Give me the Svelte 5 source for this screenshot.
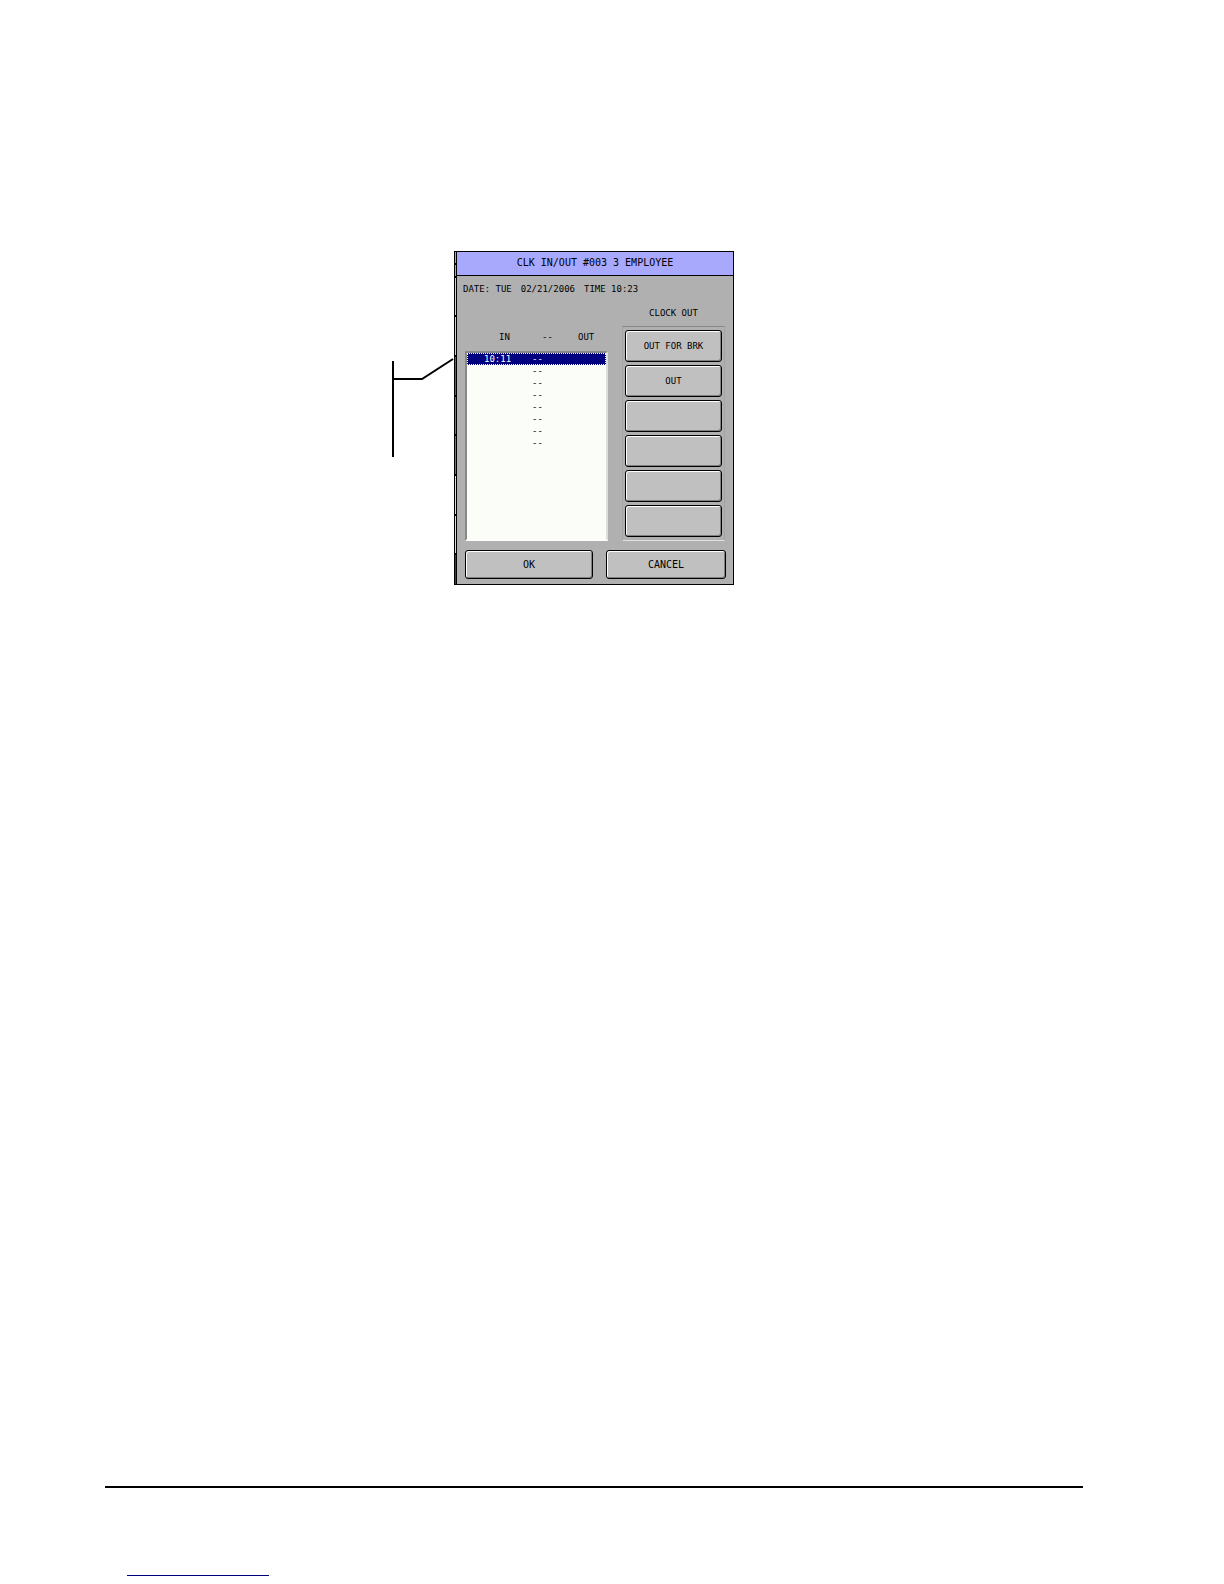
<script>
  let entries = Array.from({ length: 8 }, (_, i) => ({
    in: i === 0 ? "10:11" : "",
    out: "",
  }))
  let actions = ["OUT FOR BRK", "OUT", "", "", "", ""]
  let selected = 0
</script>

<div class="page">
  <div class="figure">
    <svg class="callout" width="62" height="100" viewBox="0 0 62 100">
      <path d="M1 3V99M1 21H30L61 1" fill="none" stroke="#000" stroke-width="2" />
    </svg>

    <div class="screen">
      <div class="edge">
        <i class="sky short"></i>
        <i class="sky short"></i>
        <i class="peach"></i>
        <i class="peach"></i>
        <i class="blue"></i>
        <i class="purple"></i>
        <i class="purple"></i>
        <i class="yellow"></i>
        <i class="yellow"></i>
        <i class="red"></i>
      </div>

      <div class="dialog">
        <h1>CLK IN/OUT #003 3 EMPLOYEE</h1>
        <div class="status">
          <span>DATE: TUE</span>
          <span>02/21/2006</span>
          <span>TIME 10:23</span>
        </div>

        <div class="content">
          <div class="times">
            <div class="head">
              <span>IN</span>
              <span>--</span>
              <span>OUT</span>
            </div>
            <div class="list" role="listbox" aria-label="IN -- OUT">
              {#each entries as entry, i}
                <button
                  class="row"
                  class:selected={selected === i}
                  role="option"
                  aria-selected={selected === i}
                  on:click={() => (selected = i)}
                >
                  <span>{entry.in}</span>
                  <span>--</span>
                  <span>{entry.out}</span>
                </button>
              {/each}
            </div>
          </div>

          <div class="actions">
            <h2>CLOCK OUT</h2>
            <div class="group">
              {#each actions as action}
                <button class="key">{action}</button>
              {/each}
            </div>
          </div>
        </div>

        <div class="bottom">
          <button class="key">OK</button>
          <button class="key">CANCEL</button>
        </div>
      </div>
    </div>
  </div>

  <div class="footer">
    <div class="underline"></div>
  </div>
</div>

<style>
  :global(body) {
    background: #fff;
  }

  .page {
    display: flex;
    flex-direction: column;
    box-sizing: border-box;
    min-height: 100vh;
    padding: 251px 141px 8px 105px;
    color: #000;
    font: 9px/12px "DejaVu Sans Mono", monospace;
  }

  .figure {
    position: relative;
    align-self: center;
  }

  /* pointer to the selected row */
  .callout {
    position: absolute;
    top: 107px;
    right: 100%;
  }

  .screen {
    display: flex;
    box-sizing: border-box;
    width: 280px;
    border: 1px solid #000;
  }

  .edge {
    display: flex;
    flex-direction: column;
    gap: 2px;
    width: 1px;
    background: #000;
    border-right: 1px solid #000;
  }

  .edge i {
    flex: 38 0 0;
  }

  .edge .short {
    flex-grow: 11;
  }

  .edge .red {
    flex-grow: 29;
  }

  .sky { background: #7fb4e6; }
  .peach { background: #f0c8a4; }
  .blue { background: #3465b4; }
  .purple { background: #8858c0; }
  .yellow { background: #e8e880; }
  .red { background: #a81010; }

  .dialog {
    flex: 1;
    background: #b0b0b0;
  }

  h1 {
    margin: 0;
    padding-bottom: 2px;
    background: #a8a8fc;
    border-bottom: 1px solid #000;
    font-size: 10px;
    line-height: 21px;
    font-weight: normal;
    text-align: center;
  }

  .status {
    display: flex;
    gap: 9px;
    padding: 7px 6px 0;
  }

  .content {
    display: flex;
    justify-content: space-between;
    padding: 12px 8px 0;
  }

  .times {
    display: flex;
    flex-direction: column;
    width: 143px;
  }

  .head {
    display: grid;
    grid-template-columns: 43px 36px auto;
    padding: 24px 0 8px 34px;
  }

  .list {
    flex: 1;
    background: #fbfdf9;
    border: 2px solid;
    border-color: #888 #ddd #fff #888;
  }

  .row {
    display: grid;
    grid-template-columns: 48px 48px auto;
    box-sizing: border-box;
    width: 100%;
    height: 12px;
    padding: 0 0 0 16px;
    background: none;
    border: 1px dotted transparent;
    color: #000;
    font: inherit;
    line-height: 10px;
    text-align: left;
  }

  .row.selected {
    background: #000080;
    border-color: #fff;
    color: #fff;
  }

  .actions {
    width: 103px;
  }

  h2 {
    margin: 0 0 7px;
    font-size: 9px;
    font-weight: normal;
    text-align: center;
  }

  .group {
    display: flex;
    flex-direction: column;
    gap: 3px;
    padding: 3px 2px;
    border: 1px solid #a4a4a4;
    border-top-color: #888;
    border-bottom-color: #e0e0e0;
  }

  .key {
    height: 32px;
    padding: 0;
    background: #c0c0c0;
    border: 1px solid #000;
    border-radius: 3px;
    box-shadow: inset 1px 1px #fff, inset -1px -1px #808080;
    color: #000;
    font: inherit;
  }

  .bottom {
    display: grid;
    grid-template-columns: 128px 1fr;
    gap: 13px;
    padding: 9px 7px 5px 8px;
  }

  .bottom .key {
    height: 29px;
    font-size: 10px;
  }

  .footer {
    margin-top: auto;
    height: 88px;
    border-top: 2px solid #000;
  }

  .underline {
    width: 142px;
    margin: 87px 0 0 22px;
    border-top: 1px solid #00007c;
  }
</style>
